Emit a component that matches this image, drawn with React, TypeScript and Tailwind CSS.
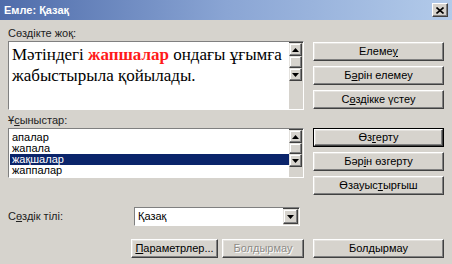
import React from "react";

const font = { fontFamily: '"Liberation Sans", "DejaVu Sans", sans-serif' };

function Btn({ children, className = "", disabled = false, def = false }: { children: React.ReactNode; className?: string; disabled?: boolean; def?: boolean }) {
  const inner = (
    <div
      className={
        "flex h-full w-full items-center justify-center border border-t-white border-l-white border-r-[#404040] border-b-[#404040] bg-[#d6d3cd] text-[11px] shadow-[inset_-1px_-1px_0_#808080,inset_1px_1px_0_#e4e2de] " +
        (disabled ? "text-[#8e8c88] [text-shadow:1px_1px_0_#fff]" : "text-black")
      }
    >
      {children}
    </div>
  );
  if (def) {
    return <div className={"border border-black " + className}>{inner}</div>;
  }
  return <div className={className}>{inner}</div>;
}

function Arrow({ up }: { up?: boolean }) {
  return (
    <div className="flex h-[13px] w-[13px] items-center justify-center border border-t-[#e4e2de] border-l-[#e4e2de] border-r-[#404040] border-b-[#404040] bg-[#d6d3cd] shadow-[inset_-1px_-1px_0_#808080,inset_1px_1px_0_#fff]">
      <svg width="7" height="4" viewBox="0 0 7 4">
        {up ? <polygon points="3.5,0 7,4 0,4" fill="#000" /> : <polygon points="0,0 7,0 3.5,4" fill="#000" />}
      </svg>
    </div>
  );
}

function ScrollBar({ thumbH }: { thumbH: number }) {
  return (
    <div className="flex w-[13px] shrink-0 flex-col bg-[#ebe9e5]">
      <Arrow up />
      <div className="w-[13px] border border-t-[#e4e2de] border-l-[#e4e2de] border-r-[#404040] border-b-[#404040] bg-[#d6d3cd] shadow-[inset_-1px_-1px_0_#808080,inset_1px_1px_0_#fff]" style={{ height: thumbH }} />
      <div className="flex-1" />
      <Arrow />
    </div>
  );
}

const U = ({ c }: { c: string }) => <span className="underline underline-offset-1">{c}</span>;

export default function App() {
  return (
    <div className="h-[264px] w-[452px] overflow-hidden bg-[#d6d3cd] select-none" style={font}>
      {/* Title bar */}
      <div className="flex h-[20px] items-center justify-between bg-gradient-to-r from-[#4f6caa] via-[#8aa5d4] to-[#b3cbea] pl-[4px] pr-[4px]">
        <span className="text-[11px] font-bold text-white">Емле: Қазақ</span>
        <div className="flex h-[14px] w-[16px] items-center justify-center border border-t-white border-l-white border-r-[#404040] border-b-[#404040] bg-[#d6d3cd] shadow-[inset_-1px_-1px_0_#808080]">
          <svg width="8" height="7" viewBox="0 0 8 7">
            <path d="M0.5 0.5 L7.5 6.5 M7.5 0.5 L0.5 6.5" stroke="#000" strokeWidth="1.6" />
          </svg>
        </div>
      </div>

      {/* Section A */}
      <div className="flex pl-[8px] pr-[8px]">
        <div className="flex w-[296px] flex-col">
          <div className="mt-[7px] h-[13px] text-[11px] leading-[13px] text-[#222]">Сөздікте жоқ:</div>
          <div className="mt-[1px] flex h-[69px] border border-t-[#808080] border-l-[#808080] border-r-white border-b-white shadow-[inset_1px_1px_0_#404040]">
            <div className="flex-1 bg-white pl-[3px] pt-[2px] font-['Liberation_Serif','DejaVu_Serif',serif] text-[17px] leading-[21px] text-black">
              <div>
                Мәтіндегі <span className="font-bold text-[#ff1a1a]">жапшалар</span> ондағы ұғымға
              </div>
              <div>жабыстырыла қойылады.</div>
            </div>
            <div className="flex flex-col py-[1px] pr-[1px]">
              <ScrollBar thumbH={12} />
            </div>
          </div>
        </div>
        <div className="ml-[9px] flex w-[131px] flex-col gap-[5px] pt-[22px]">
          <Btn className="h-[19px]">
            <span>Елеме<U c="у" /></span>
          </Btn>
          <Btn className="h-[19px]">
            <span>Б<U c="ә" />рін елемеу</span>
          </Btn>
          <Btn className="h-[19px]">
            <span>С<U c="ө" />здікке үстеу</span>
          </Btn>
        </div>
      </div>

      {/* Section B */}
      <div className="flex pl-[8px] pr-[8px]">
        <div className="flex w-[296px] flex-col">
          <div className="mt-[4px] h-[13px] text-[11px] leading-[13px] text-[#222]">
            Ұ<U c="с" />ыныстар:
          </div>
          <div className="mt-[1px] flex h-[50px] border border-t-[#808080] border-l-[#808080] border-r-white border-b-white shadow-[inset_1px_1px_0_#404040]">
            <div className="flex-1 overflow-hidden bg-white pl-[1px] pt-[3px] text-[11px] leading-[11px] text-black">
              <div className="h-[11px] pl-[2px]">апалар</div>
              <div className="h-[11px] pl-[2px]">жапала</div>
              <div className="h-[11px] bg-[#0a246a] pl-[2px] text-white">жақшалар</div>
              <div className="h-[11px] pl-[2px]">жаппалар</div>
            </div>
            <div className="flex flex-col py-[1px] pr-[1px]">
              <ScrollBar thumbH={11} />
            </div>
          </div>
        </div>
        <div className="ml-[9px] flex w-[131px] flex-col gap-[5px] pt-[18px]">
          <Btn className="h-[19px]" def>
            <span>Өз<U c="г" />ерту</span>
          </Btn>
          <Btn className="h-[19px]">
            <span>Бәр<U c="і" />н өзгерту</span>
          </Btn>
          <Btn className="h-[19px]">
            <span>Өзауыс<U c="т" />ырғыш</span>
          </Btn>
        </div>
      </div>

      {/* Section C */}
      <div className="mt-[12px] flex items-center pl-[8px]">
        <div className="w-[126px] text-[11px] text-[#222]">
          С<U c="ө" />здік тілі:
        </div>
        <div className="flex h-[19px] w-[166px] border border-t-[#808080] border-l-[#808080] border-r-white border-b-white shadow-[inset_1px_1px_0_#404040]">
          <div className="flex flex-1 items-center bg-white pl-[3px] text-[11px] text-black">Қазақ</div>
          <div className="flex py-[1px] pr-[1px]">
            <div className="flex h-[15px] w-[15px] items-center justify-center border border-t-[#e4e2de] border-l-[#e4e2de] border-r-[#404040] border-b-[#404040] bg-[#d6d3cd] shadow-[inset_-1px_-1px_0_#808080,inset_1px_1px_0_#fff]">
              <svg width="7" height="4" viewBox="0 0 7 4">
                <polygon points="0,0 7,0 3.5,4" fill="#000" />
              </svg>
            </div>
          </div>
        </div>
      </div>

      {/* Section D */}
      <div className="mt-[13px] flex pl-[131px]">
        <Btn className="h-[19px] w-[87px]">
          <span><U c="П" />араметрлер...</span>
        </Btn>
        <Btn className="ml-[4px] h-[19px] w-[82px]" disabled>
          Болдырмау
        </Btn>
        <Btn className="ml-[9px] h-[19px] w-[131px]">Болдырмау</Btn>
      </div>
    </div>
  );
}
